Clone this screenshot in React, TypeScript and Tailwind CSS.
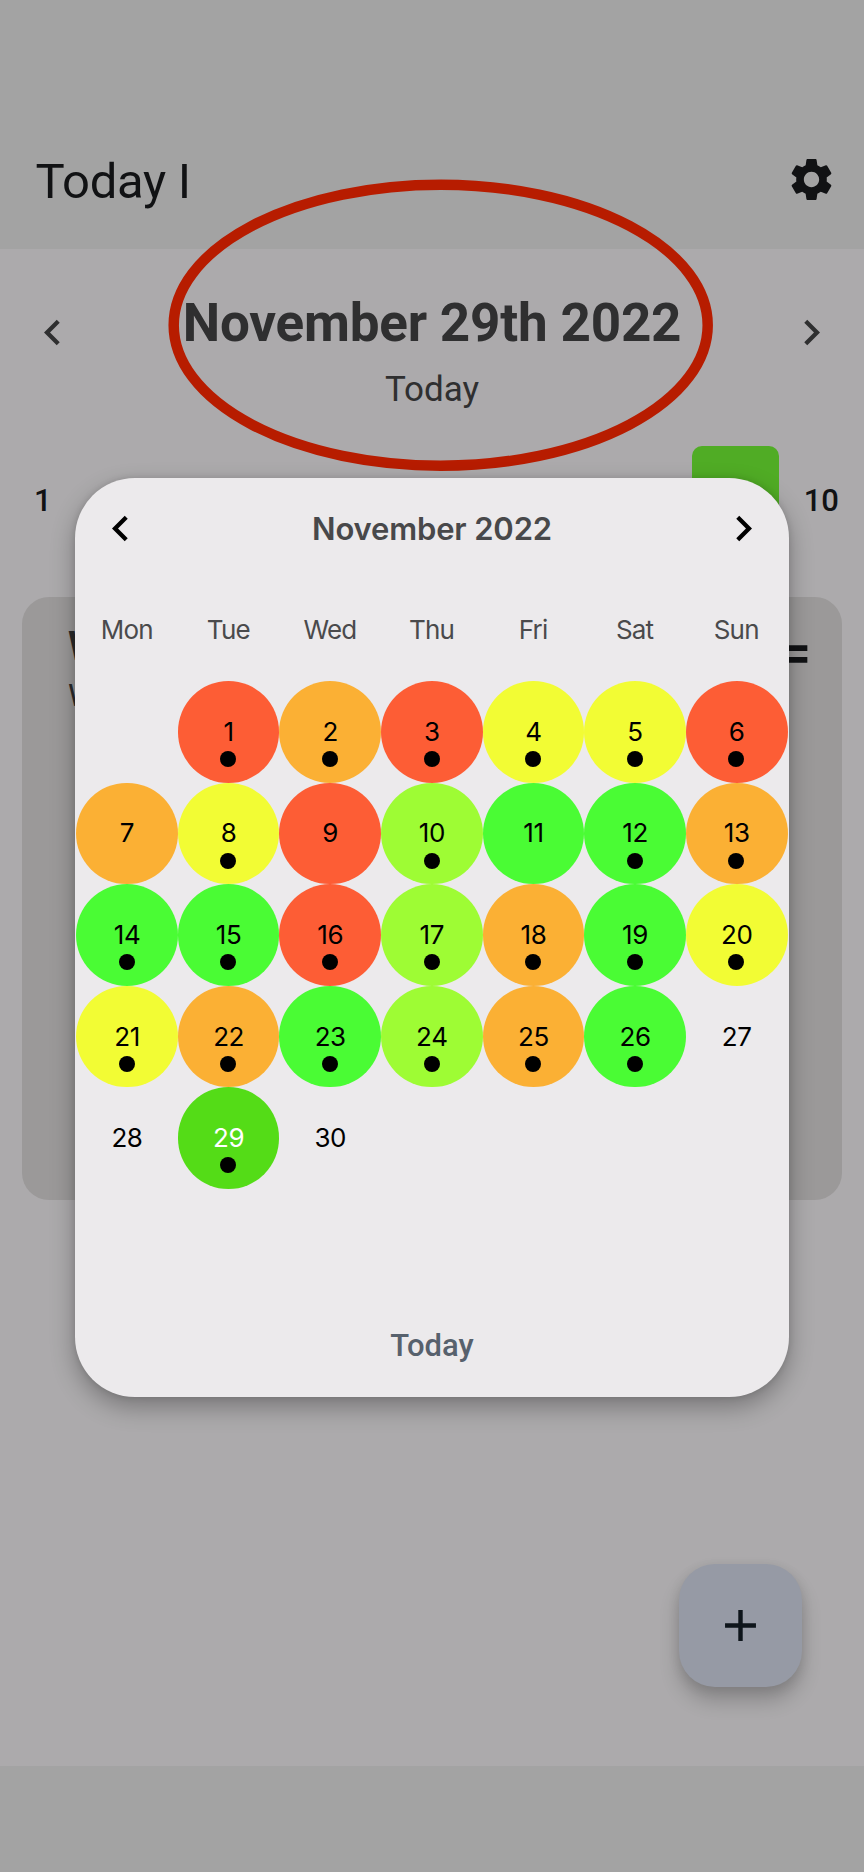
import React from "react";
import { MdAdd, MdChevronLeft, MdChevronRight, MdDragHandle, MdSettings } from "react-icons/md";

const WEEKDAYS = ["Mon", "Tue", "Wed", "Thu", "Fri", "Sat", "Sun"];

const TONES = {
  red: "bg-[#fd5d35]",
  orange: "bg-[#fbb034]",
  yellow: "bg-[#f2fc34]",
  lime: "bg-[#9efc34]",
  green: "bg-[#4afc34]",
  selected: "bg-[#54dc17] text-white",
  none: "",
};

type Tone = keyof typeof TONES;

const MONTH: [Tone, boolean][] = [
  ["red", true], ["orange", true], ["red", true], ["yellow", true], ["yellow", true], ["red", true],
  ["orange", false], ["yellow", true], ["red", false], ["lime", true], ["green", false], ["green", true], ["orange", true],
  ["green", true], ["green", true], ["red", true], ["lime", true], ["orange", true], ["green", true], ["yellow", true],
  ["yellow", true], ["orange", true], ["green", true], ["lime", true], ["orange", true], ["green", true], ["none", false],
  ["none", false], ["selected", true], ["none", false],
];

function Day({ day, tone, marked }: { day: number; tone: Tone; marked: boolean }) {
  return (
    <button
      className={`relative flex h-full w-full items-center justify-center rounded-full text-[26px] leading-none font-[370] tracking-[-0.4px] ${TONES[tone]}`}
    >
      {day}
      {marked && <span className="absolute top-[70px] left-[42.5px] size-4 rounded-full bg-black" />}
    </button>
  );
}

function CalendarDialog() {
  return (
    <div
      role="dialog"
      className="absolute top-[478px] left-[75px] flex h-[919px] w-[714px] flex-col rounded-[60px] bg-[#eceaec] font-['Inter',sans-serif] shadow-[0_10px_24px_rgba(0,0,0,0.3),0_0_6px_rgba(0,0,0,0.12)]"
    >
      <div className="flex h-[101px] items-center justify-between px-5 text-black">
        <MdChevronLeft size={51} />
        <h2 className="pt-[2px] text-[31px] font-semibold tracking-[-0.15px] text-[#48484a]">November 2022</h2>
        <MdChevronRight size={51} />
      </div>
      <div className="grid h-[102px] grid-cols-7 items-center pr-[2px] pb-[2px] pl-[1px] text-center text-[26px] font-[370] tracking-[-0.8px] text-[#4a4a4c]">
        {WEEKDAYS.map((d) => (
          <span key={d}>{d}</span>
        ))}
      </div>
      <div className="grid auto-rows-[101.6px] grid-cols-7 pr-[1.5px] pl-[1.2px] text-black">
        <span />
        {MONTH.map(([tone, marked], i) => (
          <Day key={i} day={i + 1} tone={tone} marked={marked} />
        ))}
      </div>
      <button className="mt-auto mb-[29px] h-11 font-[Roboto] text-[31px] leading-[44px] font-medium text-[#57616d]">
        Today
      </button>
    </div>
  );
}

export default function App() {
  return (
    <div className="relative flex h-[1872px] w-[864px] flex-col overflow-hidden bg-[#acaaac] font-['Roboto',sans-serif]">
      <header className="flex h-[249px] items-end justify-between bg-[#a3a3a3] pr-[27px] pb-[36px] pl-[35.5px] text-[#111214]">
        <h1 className="text-[49px] leading-[62px] tracking-[-0.3px]">Today I</h1>
        <MdSettings size={51} className="mb-[8px]" />
      </header>

      <main className="flex flex-1 flex-col">
        <section className="flex h-[197px] items-start justify-between px-[27px] text-[#2f2f30]">
          <MdChevronLeft size={51} className="mt-[58px]" />
          <div className="pt-[42px] text-center">
            <div className="text-[53px] leading-[64px] font-bold tracking-[-0.2px] whitespace-nowrap">
              November 29th 2022
            </div>
            <div className="mt-[14px] text-[35px] leading-[42px]">Today</div>
          </div>
          <MdChevronRight size={51} className="mt-[58px]" />
        </section>

        <section className="flex h-[151px] items-start justify-between pr-[25px] pl-[34px] text-[31px] leading-[36px] font-medium text-[#111214]">
          <span className="mt-[37px]">1</span>
          <div className="flex gap-[25px]">
            <div className="h-[108px] w-[87px] rounded-[10px] bg-[#50ac25]" />
            <span className="mt-[37px]">10</span>
          </div>
        </section>

        <section className="mx-[22px] flex h-[603px] items-start justify-between rounded-[27px] bg-[#9b9999] pr-[23px] pl-[46px]">
          <div className="pt-[25px] text-[#2a2b2b]">
            <div className="text-[40px] leading-[50px] font-bold">W</div>
            <div className="mt-[5px] text-[31px] leading-[38px]">W</div>
          </div>
          <MdDragHandle size={70} className="mt-[22px] text-[#111214]" />
        </section>

        <button className="mt-auto mr-[62px] mb-[79px] flex size-[123px] items-center justify-center self-end rounded-[36px] bg-[#969aa5] text-[#0e151b] shadow-[0_14px_20px_rgba(0,0,0,0.2),0_3px_12px_rgba(0,0,0,0.1)]">
          <MdAdd size={53} />
        </button>
      </main>

      <footer className="h-[106px] bg-[#a3a3a3]" />

      <svg className="absolute top-[170px] left-[160px]" width="560" height="310" viewBox="160 170 560 310" fill="none">
        <ellipse cx="440.7" cy="325.2" rx="267" ry="140.5" stroke="#b71c00" strokeWidth="10.5" />
      </svg>

      <CalendarDialog />
    </div>
  );
}
